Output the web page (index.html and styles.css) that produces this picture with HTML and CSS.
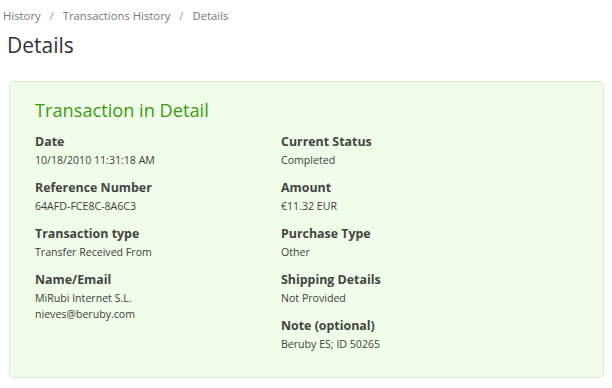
FILE: index.html
```html
<!DOCTYPE html>
<html lang="en">
<head>
    <meta charset="UTF-8">
    <meta name="viewport" content="width=device-width, initial-scale=1.0">
    <title>Details</title>
    <link rel="stylesheet" href="styles.css">
</head>
<body>
    <div class="breadcrumb">
        <a href="#">History</a>
        <span class="sep">/</span>
        <a href="#">Transactions History</a>
        <span class="sep">/</span>
        <span>Details</span>
    </div>
    <h1>Details</h1>

    <div class="panel">
        <h2>Transaction in Detail</h2>
        <div class="columns">
            <div class="column">
                <div class="field">
                    <div class="label">Date</div>
                    <div class="value">10/18/2010 11:31:18 AM</div>
                </div>
                <div class="field">
                    <div class="label">Reference Number</div>
                    <div class="value">64AFD-FCE8C-8A6C3</div>
                </div>
                <div class="field">
                    <div class="label">Transaction type</div>
                    <div class="value">Transfer Received From</div>
                </div>
                <div class="field">
                    <div class="label">Name/Email</div>
                    <div class="value">MiRubi Internet S.L.<br>nieves@beruby.com</div>
                </div>
            </div>
            <div class="column">
                <div class="field">
                    <div class="label">Current Status</div>
                    <div class="value">Completed</div>
                </div>
                <div class="field">
                    <div class="label">Amount</div>
                    <div class="value">&euro;11.32 EUR</div>
                </div>
                <div class="field">
                    <div class="label">Purchase Type</div>
                    <div class="value">Other</div>
                </div>
                <div class="field">
                    <div class="label">Shipping Details</div>
                    <div class="value">Not Provided</div>
                </div>
                <div class="field">
                    <div class="label">Note (optional)</div>
                    <div class="value">Beruby ES; ID 50265</div>
                </div>
            </div>
        </div>
    </div>
</body>
</html>
```

FILE: styles.css
```css
body {
    font-family: "Open Sans", Arial, sans-serif;
    margin: 0;
    padding: 7px 8px 0 3px;
    color: #444;
    background: #fff;
}
.breadcrumb {
    font-size: 11.3px;
    line-height: 18px;
    color: #777;
}
.breadcrumb a {
    color: #777;
    text-decoration: none;
}
.breadcrumb .sep {
    color: #999;
    margin: 0 6px;
}
h1 {
    font-size: 21px;
    font-weight: normal;
    color: #333;
    margin: 6px 0 0 4px;
    line-height: 28px;
}
.panel {
    margin: 22px 0 0 6px;
    background: #f0fde9;
    border: 1px solid #dce8d5;
    border-radius: 5px;
    padding: 15px 25px 15px;
}
h2 {
    font-size: 18.2px;
    font-weight: normal;
    color: #3b9a10;
    margin: 0 0 9px;
    line-height: 26px;
}
.columns {
    display: flex;
}
.column {
    width: 246px;
}
.field {
    margin-bottom: 10px;
}
.label {
    font-size: 12.4px;
    font-weight: bold;
    color: #444;
    line-height: 20px;
}
.value {
    font-size: 10.6px;
    line-height: 16px;
    color: #3f3f3f;
}
```
